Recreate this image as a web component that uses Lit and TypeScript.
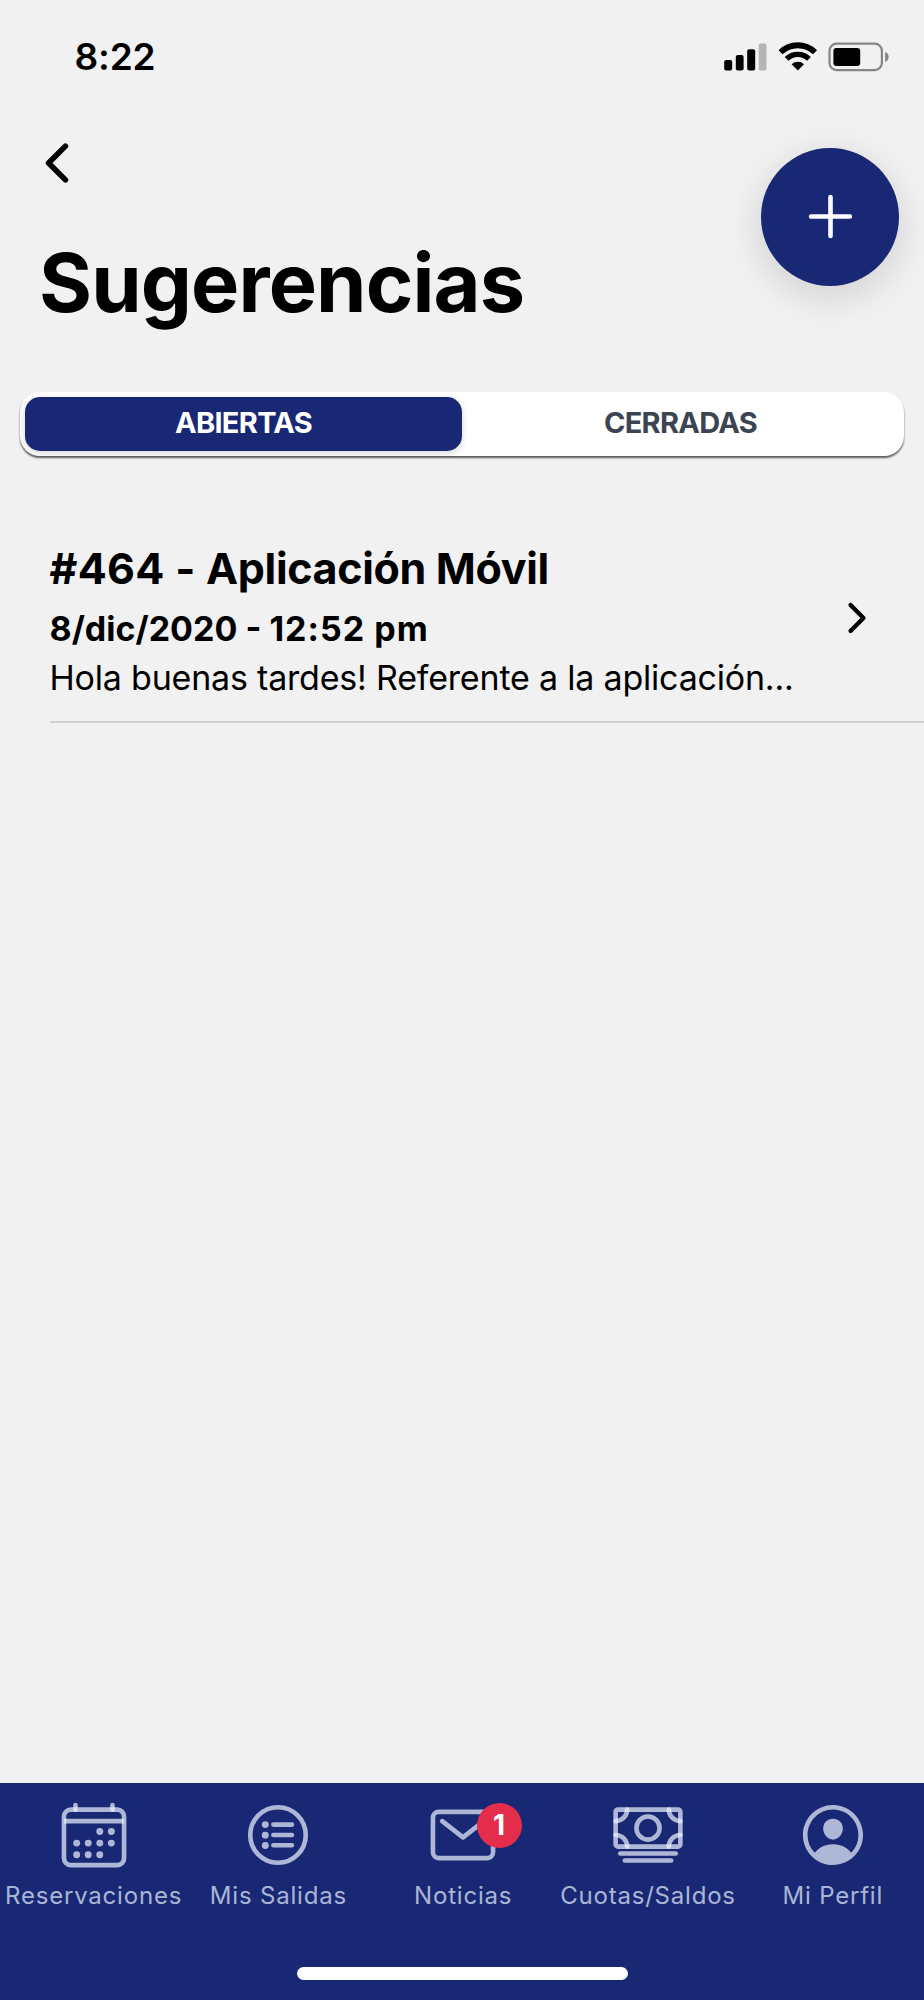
import { LitElement, html, svg, css } from "lit";
import { customElement, property, state } from "lit/decorators.js";
import { classMap } from "lit/directives/class-map.js";

const icons = {
  back: svg`<path d="M328 112L184 256l144 144" fill="none" stroke="currentColor" stroke-linecap="round" stroke-linejoin="round" stroke-width="48"/>`,
  forward: svg`<path d="M184 112l144 144-144 144" fill="none" stroke="currentColor" stroke-linecap="round" stroke-linejoin="round" stroke-width="48"/>`,
  add: svg`<path d="M256 112v288M400 256H112" fill="none" stroke="currentColor" stroke-linecap="round" stroke-linejoin="round" stroke-width="34"/>`,
  calendar: svg`
    <g fill="none" stroke="currentColor" stroke-width="32" stroke-linejoin="round">
      <rect x="48" y="80" width="416" height="384" rx="48"/>
      <path d="M128 48v32" stroke-linecap="round"/>
      <path d="M384 48v32" stroke-linecap="round"/>
      <path d="M464 160H48"/>
    </g>
    <g fill="currentColor">
      <circle cx="296" cy="232" r="24"/><circle cx="376" cy="232" r="24"/>
      <circle cx="296" cy="312" r="24"/><circle cx="376" cy="312" r="24"/>
      <circle cx="136" cy="312" r="24"/><circle cx="216" cy="312" r="24"/>
      <circle cx="136" cy="392" r="24"/><circle cx="216" cy="392" r="24"/>
      <circle cx="296" cy="392" r="24"/>
    </g>`,
  list: svg`
    <g fill="none" stroke="currentColor" stroke-width="32">
      <circle cx="256" cy="256" r="192"/>
      <path d="M224 184h128M224 256h128M224 327h128" stroke-linecap="round"/>
    </g>
    <g fill="currentColor">
      <circle cx="168" cy="184" r="24"/><circle cx="168" cy="257" r="24"/><circle cx="168" cy="328" r="24"/>
    </g>`,
  mail: svg`
    <g fill="none" stroke="currentColor" stroke-width="32" stroke-linejoin="round" stroke-linecap="round">
      <rect x="48" y="96" width="416" height="320" rx="40"/>
      <path d="M112 160l144 112 144-112"/>
    </g>`,
  cash: svg`
    <g fill="none" stroke="currentColor" stroke-width="32" stroke-linejoin="round" stroke-linecap="round">
      <rect x="32" y="80" width="448" height="256" rx="16"/>
      <path d="M64 384h384"/>
      <path d="M96 432h320"/>
      <circle cx="256" cy="208" r="80"/>
      <path d="M480 160a80 80 0 01-80-80"/>
      <path d="M32 160a80 80 0 0080-80"/>
      <path d="M480 256a80 80 0 00-80 80"/>
      <path d="M32 256a80 80 0 0180 80"/>
    </g>`,
  person: svg`
    <path fill="currentColor" d="M258.9 48C141.92 46.42 46.42 141.92 48 258.9c1.56 112.19 92.91 203.54 205.1 205.1 117 1.6 212.48-93.9 210.88-210.88C462.44 140.91 371.09 49.56 258.9 48zm126.42 327.25a4 4 0 01-6.14-.32 124.27 124.27 0 00-32.35-29.59C321.37 329 289.11 320 256 320s-65.37 9-90.83 25.34a124.24 124.24 0 00-32.35 29.58 4 4 0 01-6.14.32A175.32 175.32 0 0180 259c-1.63-97.31 78.22-178.76 175.57-179S432 158.81 432 256a175.32 175.32 0 01-46.68 119.25z" fill-rule="nonzero"/>
    <path fill="currentColor" d="M256 144c-19.72 0-37.55 7.39-50.22 20.82s-19 32-17.57 51.93C191.11 256 221.52 288 256 288s64.83-32 67.79-71.24c1.48-19.74-4.8-38.14-17.68-51.82C293.39 151.44 275.59 144 256 144z"/>`,
};
type IconName = keyof typeof icons;

@customElement("app-icon")
class AppIcon extends LitElement {
  static styles = css`
    :host { display: block; flex: none; }
    svg { display: block; width: 100%; height: 100%; }
  `;
  @property() name: IconName = "add";
  render() {
    return html`<svg viewBox="0 0 512 512" aria-hidden="true">${icons[this.name]}</svg>`;
  }
}

@customElement("status-bar")
class StatusBar extends LitElement {
  static styles = css`
    :host {
      display: flex;
      align-items: center;
      justify-content: space-between;
      box-sizing: border-box;
      height: 113px;
      padding: 0 34px 0 74.5px;
    }
    .time { font-size: 37px; font-weight: 600; letter-spacing: -0.15px; line-height: 50px; }
    svg { display: block; }
  `;
  render() {
    return html`
      <span class="time">8:22</span>
      <svg width="168" height="32" viewBox="0 0.5 168 32" aria-hidden="true">
        <rect x="2.2" y="19.5" width="8" height="10.5" rx="2"/>
        <rect x="13.8" y="14.6" width="7.8" height="15.4" rx="2"/>
        <rect x="25.2" y="8.8" width="8" height="21.2" rx="2"/>
        <rect x="36.7" y="3" width="7.8" height="27" rx="2" fill="#b5b5b5"/>
        <g fill="none" stroke="#000">
          <path d="M58.6 11.8a24.5 24.5 0 0 1 34.4 0" stroke-width="5.8"/>
          <path d="M64.6 18.4a16 16 0 0 1 22.4 0" stroke-width="5.4"/>
        </g>
        <path d="M75.8 30l-6.2-6.2a9 9 0 0 1 12.4 0z"/>
        <rect x="107.5" y="3.2" width="52.4" height="26.4" rx="7.2" fill="none" stroke="#858585" stroke-width="2.2"/>
        <rect x="111.4" y="7.6" width="26.8" height="18" rx="3"/>
        <path d="M163.2 11.6c4.6 1.6 4.6 8.4 0 10z" fill="#858585"/>
      </svg>
    `;
  }
}

@customElement("segment-control")
class SegmentControl extends LitElement {
  static styles = css`
    :host {
      display: grid;
      grid-template-columns: 1fr 1fr;
      gap: 0;
      box-sizing: border-box;
      height: 64px;
      padding: 5px 5px 4.5px;
      border-radius: 20px;
      background: #fff;
      box-shadow: 0 2px 2px rgba(0, 0, 0, 0.62);
    }
    .tab {
      border: 0;
      padding: 0 0 1px;
      border-radius: 15px;
      background: none;
      color: #3b4452;
      font: 700 29px/40px Inter, sans-serif;
      letter-spacing: -0.7px;
      text-align: center;
    }
    .on {
      background: #182874;
      color: #fff;
      box-shadow: 0 2px 7px rgba(0, 0, 0, 0.17);
    }
  `;
  @state() private selected = 0;
  render() {
    return ["ABIERTAS", "CERRADAS"].map(
      (label, i) => html`<button
        class=${classMap({ tab: true, on: i === this.selected })}
        @click=${() => (this.selected = i)}
      >${label}</button>`
    );
  }
}

interface Tab { icon: IconName; label: string; badge?: number; }

@customElement("tab-bar")
class TabBar extends LitElement {
  static styles = css`
    :host {
      display: flex;
      flex-direction: column;
      align-items: center;
      justify-content: space-between;
      box-sizing: border-box;
      height: 217px;
      padding: 15px 0 20px;
      background: #182874;
    }
    .tabs {
      display: grid;
      grid-template-columns: repeat(5, minmax(0, 1fr));
      width: 100%;
    }
    .tab {
      display: flex;
      flex-direction: column;
      align-items: center;
      gap: 9px;
      padding-left: 2.4px;
      color: rgba(236, 243, 255, 0.71);
    }
    .glyph { position: relative; }
    app-icon { width: 74px; height: 74px; }
    .badge {
      position: absolute;
      left: 50.4px;
      top: 4.6px;
      width: 45px;
      height: 45px;
      border-radius: 50%;
      background: #e32d4b;
      color: #fff;
      font-size: 28px;
      font-weight: 700;
      line-height: 44px;
      text-align: center;
    }
    .label {
      font-size: 24px;
      font-weight: 400;
      line-height: 30px;
      letter-spacing: 0.8px;
      white-space: nowrap;
    }
    .home { width: 331px; height: 13px; border-radius: 7px; background: #fff; }
  `;
  private tabs: Tab[] = [
    { icon: "calendar", label: "Reservaciones" },
    { icon: "list", label: "Mis Salidas" },
    { icon: "mail", label: "Noticias", badge: 1 },
    { icon: "cash", label: "Cuotas/Saldos" },
    { icon: "person", label: "Mi Perfil" },
  ];
  render() {
    return html`
      <div class="tabs">
        ${this.tabs.map((t) => html`
          <div class="tab">
            <div class="glyph">
              <app-icon .name=${t.icon}></app-icon>
              ${t.badge ? html`<span class="badge">${t.badge}</span>` : null}
            </div>
            <span class="label">${t.label}</span>
          </div>`)}
      </div>
      <div class="home"></div>
    `;
  }
}

@customElement("app-root")
class AppRoot extends LitElement {
  static styles = css`
    :host {
      display: flex;
      flex-direction: column;
      height: 2000px;
      overflow: hidden;
      background: #f1f1f1;
      color: #000;
      font-family: Inter, sans-serif;
    }
    .head {
      display: flex;
      justify-content: space-between;
      align-items: flex-start;
      height: 278.5px;
      box-sizing: border-box;
      padding: 20px 25px 0 27px;
    }
    .back { width: 60px; height: 60px; margin: -0.4px 0 0 -0.4px; }
    h1 {
      margin: 40.4px 0 0 12px;
      font-size: 81px;
      font-weight: 700;
      line-height: 100px;
      letter-spacing: -0.85px;
    }
    .fab {
      display: grid;
      place-items: center;
      width: 138px;
      height: 138px;
      margin-top: 14.5px;
      border-radius: 50%;
      background: #182874;
      color: #fff;
      box-shadow: 0 10px 39px rgba(0, 0, 0, 0.14);
    }
    .plus { width: 69px; height: 69px; }
    segment-control { margin: 0 20px; }
    .item {
      display: flex;
      align-items: center;
      justify-content: space-between;
      box-sizing: border-box;
      height: 217px;
      margin: 50.5px 0 0 49.5px;
      padding: 0 44px 0 0;
      border-bottom: 2px solid #d2d2d3;
    }
    .text { align-self: flex-start; padding-top: 36px; }
    .text > * { margin: 0; white-space: nowrap; }
    h2 { font-size: 43px; font-weight: 700; line-height: 52px; letter-spacing: -0.34px; }
    .folio { letter-spacing: 0.3px; }
    .date { padding-top: 13px; font-size: 34px; font-weight: 700; line-height: 44px; letter-spacing: 0; }
    .time { letter-spacing: 1.05px; }
    .body { padding-top: 5px; font-size: 34px; line-height: 44px; letter-spacing: -0.2px; }
    .chevron { width: 46px; height: 46px; margin-top: 9.5px; }
    .fill { flex: 1; }
  `;
  render() {
    return html`
      <status-bar></status-bar>
      <header class="head">
        <div>
          <app-icon class="back" name="back"></app-icon>
          <h1>Sugerencias</h1>
        </div>
        <div class="fab"><app-icon class="plus" name="add"></app-icon></div>
      </header>
      <segment-control></segment-control>
      <article class="item">
        <div class="text">
          <h2><span class="folio">#464 - </span>Aplicación Móvil</h2>
          <p class="date">8/dic/2020 - <span class="time">12:52 pm</span></p>
          <p class="body">Hola buenas tardes! Referente a la aplicación...</p>
        </div>
        <app-icon class="chevron" name="forward"></app-icon>
      </article>
      <div class="fill"></div>
      <tab-bar></tab-bar>
    `;
  }
}
